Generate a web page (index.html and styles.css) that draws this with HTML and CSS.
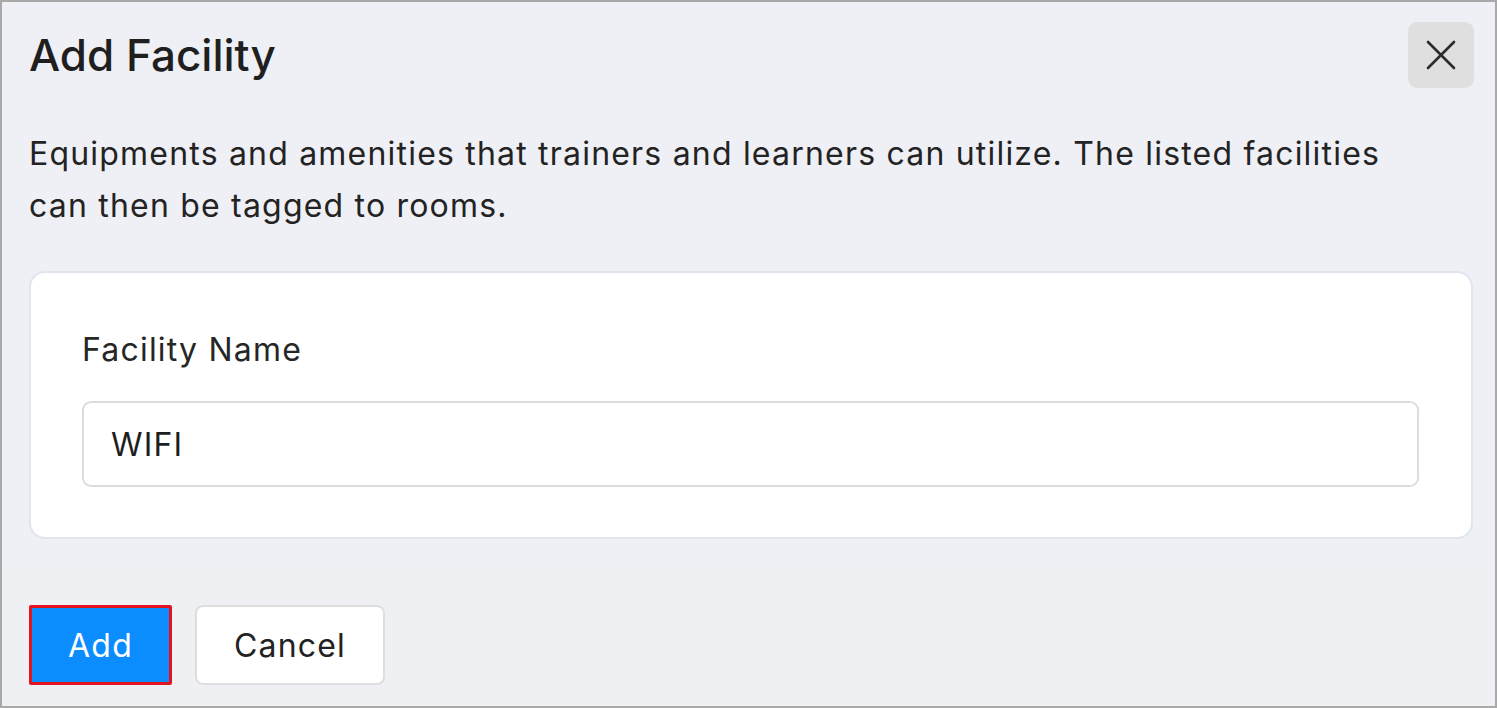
FILE: index.html
```html
<!DOCTYPE html>
<html lang="en">
<head>
    <meta charset="UTF-8">
    <meta name="viewport" content="width=device-width, initial-scale=1.0">
    <title>Add Facility</title>
    <link rel="stylesheet" href="styles.css">
</head>
<body>
    <div class="dialog">
        <header class="dialog-head">
            <h1>Add Facility</h1>
            <button class="close-btn" aria-label="Close">
                <svg width="30" height="30" viewBox="0 0 30 30" fill="none" stroke="#2b2b2b" stroke-width="2.6" stroke-linecap="round">
                    <path d="M2 2 L28 28 M28 2 L2 28"/>
                </svg>
            </button>
        </header>
        <div class="dialog-body">
            <p class="intro">Equipments and amenities that trainers and learners can utilize. The listed facilities can then be tagged to rooms.</p>
            <div class="card">
                <label for="facilityName">Facility Name</label>
                <input type="text" id="facilityName" value="WIFI">
            </div>
        </div>
        <footer class="dialog-foot">
            <button class="btn btn-primary">Add</button>
            <button class="btn btn-plain">Cancel</button>
        </footer>
    </div>
</body>
</html>
```

FILE: styles.css
```css
html, body {
    margin: 0;
    padding: 0;
}
body {
    font-family: Inter, "Noto Sans", sans-serif;
    color: #222;
    background: #eff0f4;
    letter-spacing: 1.2px;
}
.dialog {
    box-sizing: border-box;
    width: 1497px;
    height: 708px;
    border: 2px solid #a9a9a9;
    background: #eff0f5;
    display: flex;
    flex-direction: column;
}
.dialog-head {
    display: flex;
    align-items: center;
    justify-content: space-between;
    padding: 20px 21px 0 27px;
}
h1 {
    margin: 0;
    font-size: 44px;
    font-weight: 500;
    letter-spacing: 0;
    color: #1f1f1f;
}
.close-btn {
    width: 66px;
    height: 66px;
    border: none;
    border-radius: 9px;
    background: #dfdfe0;
    display: flex;
    align-items: center;
    justify-content: center;
    padding: 0;
    cursor: pointer;
}
.dialog-body {
    padding: 0 22px 0 27px;
    flex: 1;
}
.intro {
    max-width: 1390px;
    margin: 40px 0 0;
    font-size: 32px;
    line-height: 52px;
    color: #232323;
}
.card {
    margin-top: 39px;
    background: white;
    border: 2px solid #dfe5ef;
    border-radius: 16px;
    padding: 57px 52px 50px 51px;
}
label {
    display: block;
    font-size: 32px;
    color: #262626;
}
input[type="text"] {
    display: block;
    box-sizing: border-box;
    width: 100%;
    height: 86px;
    margin-top: 32px;
    padding: 0 27px;
    font-family: inherit;
    font-size: 32px;
    letter-spacing: 1.2px;
    color: #1e1e1e;
    border: 2px solid #dcdcdc;
    border-radius: 9px;
    outline: none;
}
.dialog-foot {
    display: flex;
    gap: 23px;
    padding: 42px 27px 21px;
    background: #eff0f4;
}
.btn {
    height: 80px;
    font-family: inherit;
    font-size: 32px;
    letter-spacing: 1.2px;
    border-radius: 8px;
    cursor: pointer;
}
.btn-primary {
    width: 143px;
    background: #0b8cff;
    color: white;
    border: 3px solid #e3131f;
    border-radius: 2px;
}
.btn-plain {
    width: 190px;
    background: white;
    color: #222;
    border: 2px solid #dedede;
}
```
